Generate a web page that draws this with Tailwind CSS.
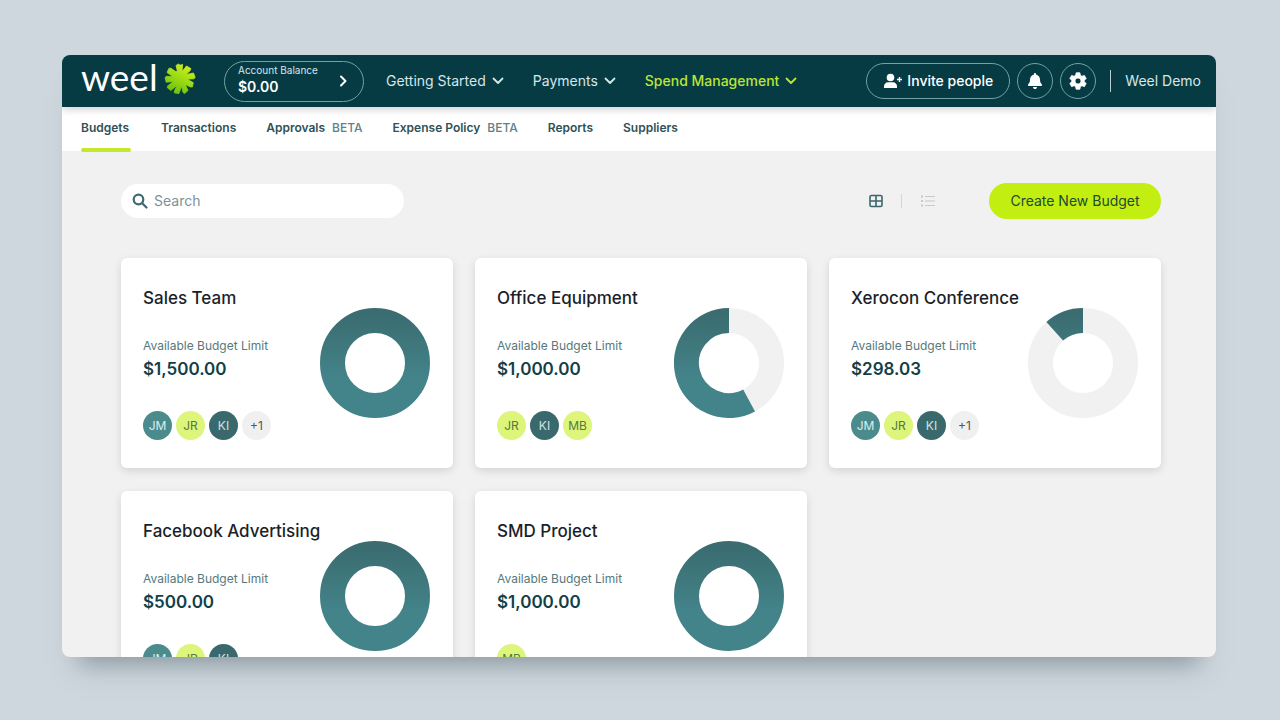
<!DOCTYPE html>
<html lang="en">
<head>
	<meta charset="utf-8">
	<meta name="viewport" content="width=device-width, initial-scale=1">
	<title>Weel - Budgets</title>
	<script src="https://cdn.jsdelivr.net/npm/@tailwindcss/browser@4"></script>
</head>
<body class="h-screen bg-[#cfd7de] pt-[55px] pb-[63px] pl-[62px] pr-16 font-['Inter','Liberation_Sans',sans-serif]">
	<!--	Shared gradients and icons	-->
	<svg class="absolute size-0" aria-hidden="true">
		<defs>
			<linearGradient id="teal" gradientUnits="userSpaceOnUse" x1="0" y1="0" x2="0" y2="110">
				<stop offset="0.05" stop-color="#3a6c70"/>
				<stop offset="0.65" stop-color="#43848a"/>
			</linearGradient>
			<linearGradient id="leaf" gradientUnits="userSpaceOnUse" x1="8" y1="-14" x2="-6" y2="14">
				<stop offset="0" stop-color="#d3ec1c"/>
				<stop offset="0.5" stop-color="#9bdc14"/>
				<stop offset="1" stop-color="#6cc010"/>
			</linearGradient>
		</defs>
		<symbol id="chevron" viewBox="0 0 12 8">
			<path d="M1.5 1.5L6 6L10.5 1.5" fill="none" stroke="currentColor" stroke-width="1.8" stroke-linecap="round" stroke-linejoin="round"/>
		</symbol>
	</svg>

	<div class="flex h-full flex-col overflow-hidden rounded-lg bg-[#f1f1f1] shadow-[0_24px_24px_-16px_rgba(70,90,100,0.5)]">
		<!--	TOP BAR		-->
		<header class="relative z-10 flex h-[52px] shrink-0 items-center bg-[#073b43] pl-[19px] pr-[15px] text-sm text-[#d5e6ea] shadow-[0_2px_8px_rgba(0,0,0,0.2)]">
			<a href="#" class="flex w-[143px] shrink-0 items-center gap-[6px] text-white" aria-label="Weel home">
				<span class="-mt-2 font-['Lato',sans-serif] text-[37px] leading-10">weel</span>
				<svg class="-mt-1 size-8" viewBox="-16 -16 32 32" fill="url(#leaf)">
					<circle r="8.500"/>
					<path stroke="url(#leaf)" stroke-width=".8" d="M-2.200 -6L-4 -13.500L-1.500 -15L0 -13.800L2.600 -14.600L2 -7.500L6.500 -13L10.800 -10.500L10.300 -8.500L6 -4.500L13.500 -6L15.200 -1.500L13.800 -.2L7 .2L13.300 3.600L12.400 8L10.400 8L5.300 5.400L8 11.500L4.600 14.600L3 13.500L1.600 7L-1 14.500L-5.600 14L-5.700 12L-3 6.600L-9.200 11.500L-12.800 8.600L-12.300 6.800L-6.500 2.600L-13.800 3.200L-15 -1.400L-13.500 -2.700L-7 -2.200L-13 -6.500L-11 -10.800L-9 -10.700Z"/>
				</svg>
			</a>

			<button class="flex h-[41px] w-[140px] shrink-0 items-center justify-between rounded-full border border-[#6fa3a8] pl-[13px] pr-4 text-left">
				<span class="pb-1">
					<span class="block text-[10px] leading-4">Account Balance</span>
					<span class="block text-sm leading-[18px] font-semibold text-white">$0.00</span>
				</span>
				<svg class="h-3 w-2 text-white" viewBox="0 0 8 12" fill="none" stroke="currentColor" stroke-width="2" stroke-linecap="round" stroke-linejoin="round"><path d="M2 1.5L6.5 6L2 10.5"/></svg>
			</button>

			<nav class="ml-[22px] flex gap-[29px]">
				<a href="#" class="flex items-center gap-[6px] whitespace-nowrap">Getting Started <svg class="h-2 w-3"><use href="#chevron"/></svg></a>
				<a href="#" class="flex items-center gap-[6px] whitespace-nowrap">Payments <svg class="h-2 w-3"><use href="#chevron"/></svg></a>
				<a href="#" class="flex items-center gap-[6px] whitespace-nowrap font-medium text-[#b9e635]">Spend Management <svg class="h-2 w-3"><use href="#chevron"/></svg></a>
			</nav>

			<div class="ml-auto flex shrink-0 items-center gap-[7px]">
				<button class="flex h-9 w-36 items-center justify-center gap-1 rounded-full border border-[#6fa3a8] text-sm font-medium whitespace-nowrap text-white">
					<svg class="h-4 w-5" viewBox="0 0 20 16" fill="currentColor"><circle cx="7.5" cy="4.5" r="3.8"/><path d="M1 15v-1.5C1 11 2.8 9.3 5 9.3h5c2.200 0 4 1.700 4 4.200V15z"/><path d="M15.800 4h1.400v1.800H19v1.400h-1.800V9h-1.400V7.200H14V5.800h1.800z"/></svg>
					Invite people
				</button>
				<button class="flex size-9 items-center justify-center rounded-full border border-[#6fa3a8] text-white" aria-label="Notifications">
					<svg class="h-4 w-[14px]" viewBox="0 0 448 512" fill="currentColor"><path d="M224 0c-18 0-32 14-32 32v19C119 66 64 131 64 208v19c0 47-17 92-48 128l-8 8c-8 9-10 23-5 34s16 19 29 19h384c13 0 24-8 29-19s3-25-5-34l-8-8c-31-36-48-81-48-128v-19c0-77-55-142-128-157V32c0-18-14-32-32-32zm45 493c12-12 19-28 19-45H160c0 17 7 33 19 45s28 19 45 19 33-7 45-19z"/></svg>
				</button>
				<button class="flex size-9 items-center justify-center rounded-full border border-[#6fa3a8] text-white" aria-label="Settings">
					<svg class="size-[18px]" viewBox="0 0 24 24" fill="currentColor" fill-rule="evenodd"><path d="M9.500 1h5l.7 3.400 2 1.200 3.300-1.100 2.500 4.300L20.400 11v2l2.600 2.200-2.500 4.300-3.300-1.100-2 1.200-.7 3.400h-5l-.7-3.400-2-1.200-3.300 1.100L1 15.200 3.600 13v-2L1 8.800l2.500-4.300 3.300 1.100 2-1.200zM12 8a4 4 0 1 0 0 8 4 4 0 0 0 0-8z" stroke="currentColor" stroke-width="1" stroke-linejoin="round"/></svg>
				</button>
				<a href="#" class="ml-[7px] border-l border-[#b9ced2] pl-[14px] leading-[22px] whitespace-nowrap">Weel Demo</a>
			</div>
		</header>

		<!--	SUB NAV		-->
		<nav class="flex h-11 shrink-0 gap-[30px] bg-white px-[19px] text-xs font-semibold whitespace-nowrap text-[#2f5158]">
			<a href="#" class="-mb-px flex h-[45px] w-[50px] flex-col justify-between pt-[13px] leading-4">Budgets<span class="h-1 rounded-full bg-[#c4e82b]"></span></a>
			<a href="#" class="pt-[13px] leading-4">Transactions</a>
			<a href="#" class="pt-[13px] leading-4">Approvals <span class="ml-1 font-medium text-[#5f8087]">BETA</span></a>
			<a href="#" class="pt-[13px] leading-4">Expense Policy <span class="ml-1 font-medium text-[#5f8087]">BETA</span></a>
			<a href="#" class="pt-[13px] leading-4">Reports</a>
			<a href="#" class="pt-[13px] leading-4">Suppliers</a>
		</nav>

		<!--	CONTENT		-->
		<main class="min-h-0 grow overflow-hidden pt-8 pr-[55px] pl-[59px]">
			<div class="flex h-9 items-center">
				<label class="flex h-[34px] w-[283px] items-center gap-[6px] rounded-full bg-white pl-[11px] text-[#3f6a70]">
					<svg class="size-4" viewBox="0 0 16 16" fill="none" stroke="currentColor" stroke-width="2.200" stroke-linecap="round"><circle cx="6.500" cy="6.500" r="4.800"/><path d="M10.200 10.200L14.500 14.500"/></svg>
					<input type="text" aria-label="Search" placeholder="Search" class="w-56 text-sm outline-none placeholder:text-[#7d9296]">
				</label>

				<div class="ml-auto flex items-center">
					<button aria-label="Grid view" class="text-[#3c656b]">
						<svg class="size-[14px]" viewBox="0 0 14 14" fill="none" stroke="currentColor" stroke-width="1.600"><rect x="1" y="1.500" width="12" height="11" rx="1.500"/><path d="M7 1.500v11M1 7h12"/></svg>
					</button>
					<span class="ml-[18px] h-[14px] w-px bg-[#d3d6d6]"></span>
					<button aria-label="List view" class="ml-[18px] text-[#c6caca]">
						<svg class="h-3 w-4" viewBox="0 0 16 12" fill="none" stroke="currentColor" stroke-width="1.200"><path d="M5 1.500h10M5 6h10M5 10.500h10"/><path d="M1 1.500h2M1 6h2M1 10.500h2" stroke-width="2"/></svg>
					</button>
				</div>

				<button class="ml-[53px] h-9 w-[172px] rounded-full bg-[#c3ee12] text-sm whitespace-nowrap text-[#1d4a33]">Create New Budget</button>
			</div>

			<div class="mt-[39px] grid grid-cols-3 gap-x-[22px] gap-y-[23px]">
				<!--	Sales Team	-->
				<section class="h-[210px] rounded-md bg-white pt-[30px] pr-[23px] pl-[22px] shadow-[0_3px_8px_rgba(0,0,0,0.12)]">
					<h2 class="text-[17px] leading-5 font-medium whitespace-nowrap text-[#1b1f2a]">Sales Team</h2>
					<div class="flex justify-between">
						<div class="pt-[30px]">
							<p class="text-xs leading-4 text-[#55797e]">Available Budget Limit</p>
							<p class="mt-[3px] text-[17px] leading-6 font-semibold text-[#123f47]">$1,500.00</p>
							<div class="mt-[30px] flex gap-1 text-xs">
								<span class="flex size-[29px] items-center justify-center rounded-full bg-[#4c8b8d] text-[#d9f0f0]">JM</span>
								<span class="flex size-[29px] items-center justify-center rounded-full bg-[#dcf57a] text-[#55793f]">JR</span>
								<span class="flex size-[29px] items-center justify-center rounded-full bg-[#3a696d] text-[#cfe3e4]">KI</span>
								<span class="flex size-[29px] items-center justify-center rounded-full bg-[#f0f0f1] text-[#55565c]">+1</span>
							</div>
						</div>
						<svg class="size-[110px] shrink-0" viewBox="0 0 110 110" fill="none" stroke-width="25"><circle cx="55" cy="55" r="42.500" stroke="url(#teal)"/></svg>
					</div>
				</section>

				<!--	Office Equipment	-->
				<section class="h-[210px] rounded-md bg-white pt-[30px] pr-[23px] pl-[22px] shadow-[0_3px_8px_rgba(0,0,0,0.12)]">
					<h2 class="text-[17px] leading-5 font-medium whitespace-nowrap text-[#1b1f2a]">Office Equipment</h2>
					<div class="flex justify-between">
						<div class="pt-[30px]">
							<p class="text-xs leading-4 text-[#55797e]">Available Budget Limit</p>
							<p class="mt-[3px] text-[17px] leading-6 font-semibold text-[#123f47]">$1,000.00</p>
							<div class="mt-[30px] flex gap-1 text-xs">
								<span class="flex size-[29px] items-center justify-center rounded-full bg-[#dcf57a] text-[#55793f]">JR</span>
								<span class="flex size-[29px] items-center justify-center rounded-full bg-[#3a696d] text-[#cfe3e4]">KI</span>
								<span class="flex size-[29px] items-center justify-center rounded-full bg-[#dcf57a] text-[#55793f]">MB</span>
							</div>
						</div>
						<svg class="size-[110px] shrink-0" viewBox="0 0 110 110" fill="none" stroke-width="25"><circle cx="55" cy="55" r="42.500" stroke="#f1f1f1"/><path d="M55 12.500A42.500 42.500 0 1 0 75.100 92.400" stroke="url(#teal)"/></svg>
					</div>
				</section>

				<!--	Xerocon Conference	-->
				<section class="h-[210px] rounded-md bg-white pt-[30px] pr-[23px] pl-[22px] shadow-[0_3px_8px_rgba(0,0,0,0.12)]">
					<h2 class="text-[17px] leading-5 font-medium whitespace-nowrap text-[#1b1f2a]">Xerocon Conference</h2>
					<div class="flex justify-between">
						<div class="pt-[30px]">
							<p class="text-xs leading-4 text-[#55797e]">Available Budget Limit</p>
							<p class="mt-[3px] text-[17px] leading-6 font-semibold text-[#123f47]">$298.03</p>
							<div class="mt-[30px] flex gap-1 text-xs">
								<span class="flex size-[29px] items-center justify-center rounded-full bg-[#4c8b8d] text-[#d9f0f0]">JM</span>
								<span class="flex size-[29px] items-center justify-center rounded-full bg-[#dcf57a] text-[#55793f]">JR</span>
								<span class="flex size-[29px] items-center justify-center rounded-full bg-[#3a696d] text-[#cfe3e4]">KI</span>
								<span class="flex size-[29px] items-center justify-center rounded-full bg-[#f0f0f1] text-[#55565c]">+1</span>
							</div>
						</div>
						<svg class="size-[110px] shrink-0" viewBox="0 0 110 110" fill="none" stroke-width="25"><circle cx="55" cy="55" r="42.500" stroke="#f1f1f1"/><path d="M55 12.500A42.500 42.500 0 0 0 26.700 23.300" stroke="url(#teal)"/></svg>
					</div>
				</section>

				<!--	Facebook Advertising	-->
				<section class="h-[210px] rounded-md bg-white pt-[30px] pr-[23px] pl-[22px] shadow-[0_3px_8px_rgba(0,0,0,0.12)]">
					<h2 class="text-[17px] leading-5 font-medium whitespace-nowrap text-[#1b1f2a]">Facebook Advertising</h2>
					<div class="flex justify-between">
						<div class="pt-[30px]">
							<p class="text-xs leading-4 text-[#55797e]">Available Budget Limit</p>
							<p class="mt-[3px] text-[17px] leading-6 font-semibold text-[#123f47]">$500.00</p>
							<div class="mt-[30px] flex gap-1 text-xs">
								<span class="flex size-[29px] items-center justify-center rounded-full bg-[#4c8b8d] text-[#d9f0f0]">JM</span>
								<span class="flex size-[29px] items-center justify-center rounded-full bg-[#dcf57a] text-[#55793f]">JR</span>
								<span class="flex size-[29px] items-center justify-center rounded-full bg-[#3a696d] text-[#cfe3e4]">KI</span>
							</div>
						</div>
						<svg class="size-[110px] shrink-0" viewBox="0 0 110 110" fill="none" stroke-width="25"><circle cx="55" cy="55" r="42.500" stroke="url(#teal)"/></svg>
					</div>
				</section>

				<!--	SMD Project	-->
				<section class="h-[210px] rounded-md bg-white pt-[30px] pr-[23px] pl-[22px] shadow-[0_3px_8px_rgba(0,0,0,0.12)]">
					<h2 class="text-[17px] leading-5 font-medium whitespace-nowrap text-[#1b1f2a]">SMD Project</h2>
					<div class="flex justify-between">
						<div class="pt-[30px]">
							<p class="text-xs leading-4 text-[#55797e]">Available Budget Limit</p>
							<p class="mt-[3px] text-[17px] leading-6 font-semibold text-[#123f47]">$1,000.00</p>
							<div class="mt-[30px] flex gap-1 text-xs">
								<span class="flex size-[29px] items-center justify-center rounded-full bg-[#dcf57a] text-[#55793f]">MB</span>
							</div>
						</div>
						<svg class="size-[110px] shrink-0" viewBox="0 0 110 110" fill="none" stroke-width="25"><circle cx="55" cy="55" r="42.500" stroke="url(#teal)"/></svg>
					</div>
				</section>
			</div>
		</main>
	</div>
</body>
</html>
